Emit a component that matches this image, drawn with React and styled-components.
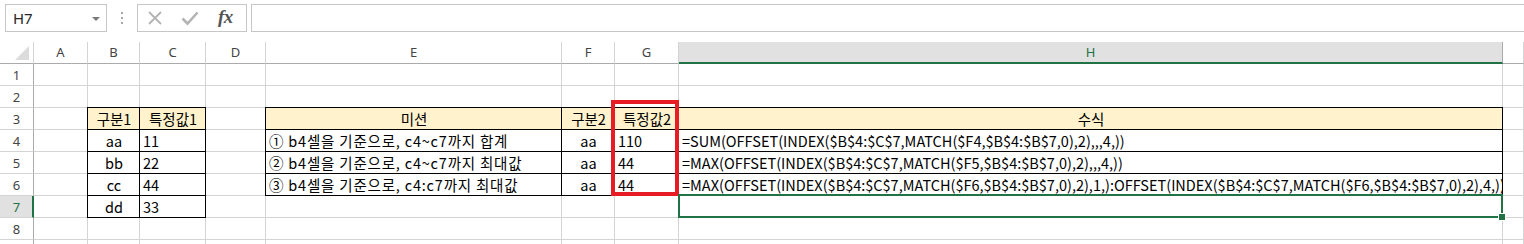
import React from 'react';
import styled, { createGlobalStyle } from 'styled-components';

const Global = createGlobalStyle`
  html, body { margin: 0; padding: 0; background: #fff; overflow: hidden; }
  body { font-family: "Noto Sans", "Liberation Sans", sans-serif; }
`;

const COLS = '34px 54px 52px 66px 60px 296px 53px 64px 824px 1fr';
const GRID = '#d4d4d4';
const HEAD_LINE = '#ababab';
const GREEN = '#217346';

const Page = styled.div`
  width: 1524px;
  height: 244px;
  overflow: hidden;
  display: flex;
  flex-direction: column;
  background: #fff;
`;

const FormulaBar = styled.div`
  height: 42px;
  flex-shrink: 0;
  display: flex;
  align-items: flex-start;
  padding-top: 4px;
  box-sizing: border-box;
`;

const NameBox = styled.div`
  margin-left: 5px;
  width: 102px;
  height: 28px;
  box-sizing: border-box;
  border: 1px solid #c6c6c6;
  display: flex;
  align-items: center;
  justify-content: space-between;
  padding: 0 6px 0 7px;
  font-family: "Noto Sans", "Liberation Sans", sans-serif;
  font-size: 15px;
  color: #262626;
`;

const Caret = styled.span`
  width: 0;
  height: 0;
  border-left: 4px solid transparent;
  border-right: 4px solid transparent;
  border-top: 4px solid #7a7a7a;
  margin-top: 1px;
`;

const Dots = styled.div`
  width: 30px;
  height: 28px;
  display: flex;
  align-items: center;
  justify-content: center;
`;

const ButtonBox = styled.div`
  width: 110px;
  height: 28px;
  box-sizing: border-box;
  border: 1px solid #c6c6c6;
  display: flex;
  align-items: center;
  padding-left: 9px;
`;

const IconSlot = styled.div`
  width: ${p => p.$w}px;
  height: 26px;
  display: flex;
  align-items: center;
`;

const Fx = styled.span`
  font-family: "Liberation Serif", "DejaVu Serif", serif;
  font-style: italic;
  font-weight: bold;
  font-size: 19px;
  color: #555;
  letter-spacing: -0.5px;
  margin-left: 1px;
  margin-top: -2px;
`;

const FormulaInput = styled.div`
  flex: 1;
  height: 28px;
  box-sizing: border-box;
  border: 1px solid #c6c6c6;
  border-right: none;
  margin-left: 4px;
`;

const Sheet = styled.div`
  display: flex;
  flex-direction: column;
  flex-shrink: 0;
`;

const Row = styled.div`
  display: grid;
  grid-template-columns: ${COLS};
  height: 22px;
  flex-shrink: 0;
`;

const ColHead = styled.div`
  box-sizing: border-box;
  height: 22px;
  border-right: 1px solid ${p => (p.$sel ? HEAD_LINE : GRID)};
  border-bottom: ${p => (p.$sel ? `2px solid ${GREEN}` : `1px solid ${HEAD_LINE}`)};
  background: ${p => (p.$sel ? '#e1e1e1' : '#fff')};
  color: ${p => (p.$sel ? GREEN : '#444')};
  font-family: "Noto Sans", "Liberation Sans", sans-serif;
  font-size: 13px;
  display: flex;
  align-items: center;
  justify-content: center;
  padding-bottom: ${p => (p.$sel ? 0 : 1)}px;
`;

const Corner = styled.div`
  box-sizing: border-box;
  height: 22px;
  border-right: 1px solid ${GRID};
  border-bottom: 1px solid ${HEAD_LINE};
  display: flex;
  align-items: flex-end;
  justify-content: flex-end;
  padding: 0 4px 3px 0;
`;

const Tri = styled.div`
  width: 0;
  height: 0;
  border-left: 14px solid transparent;
  border-bottom: 14px solid #dcdcdc;
`;

const RowHead = styled.div`
  box-sizing: border-box;
  border-right: ${p => (p.$sel ? `2px solid ${GREEN}` : `1px solid ${HEAD_LINE}`)};
  border-bottom: 1px solid ${GRID};
  background: ${p => (p.$sel ? '#e1e1e1' : '#fff')};
  color: ${p => (p.$sel ? GREEN : '#444')};
  font-family: "Noto Sans", "Liberation Sans", sans-serif;
  font-size: 13px;
  display: flex;
  align-items: center;
  justify-content: center;
  padding-left: ${p => (p.$sel ? 1 : 0)}px;
`;

const Cell = styled.div`
  position: relative;
  box-sizing: border-box;
  border-right: 1px solid ${GRID};
  border-bottom: 1px solid ${GRID};
  background: ${p => (p.$head ? '#fff2cc' : '#fff')};
  font-family: "Noto Sans CJK KR", "Noto Sans", sans-serif;
  font-size: 14.5px;
  letter-spacing: ${p => (p.$wide ? '0.8px' : '0')};
  color: #000;
  display: flex;
  align-items: center;
  justify-content: ${p => (p.$align === 'center' ? 'center' : 'flex-start')};
  padding: 1px 2px 0 3px;
  white-space: nowrap;
  line-height: 1;

  ${p =>
    p.$table &&
    `
    &::after {
      content: '';
      position: absolute;
      top: -1px;
      left: -1px;
      right: -1px;
      bottom: -1px;
      border: 1px solid #000;
      pointer-events: none;
    }
  `}
`;

const RedBox = styled.div`
  position: absolute;
  z-index: 5;
  top: -8px;
  left: -4px;
  width: 68px;
  height: 96px;
  box-sizing: border-box;
  border: 4px solid #e81c24;
  pointer-events: none;
`;

const Selection = styled.div`
  position: absolute;
  z-index: 5;
  top: -2px;
  left: -1px;
  right: -1px;
  bottom: -1px;
  box-sizing: border-box;
  border: 2px solid ${GREEN};
  pointer-events: none;
`;

const Handle = styled.div`
  position: absolute;
  right: -4px;
  bottom: -4px;
  width: 6px;
  height: 6px;
  background: ${GREEN};
  box-shadow: 0 0 0 1px #fff;
`;

const LETTERS = ['A', 'B', 'C', 'D', 'E', 'F', 'G', 'H', ''];

const h = (text) => ({ text, head: true, table: true, align: 'center' });
const c = (text) => ({ text, table: true, align: 'center' });
const l = (text) => ({ text, table: true, align: 'left' });
const m = (text) => ({ text, table: true, align: 'left', wide: true });

const ROWS = {
  3: { 2: h('구분1'), 3: h('특정값1'), 5: h('미션'), 6: h('구분2'), 7: { ...h('특정값2'), red: true }, 8: h('수식') },
  4: {
    2: c('aa'), 3: l('11'),
    5: m('① b4셀을 기준으로, c4~c7까지 합계'), 6: c('aa'), 7: l('110'),
    8: l('=SUM(OFFSET(INDEX($B$4:$C$7,MATCH($F4,$B$4:$B$7,0),2),,,4,))'),
  },
  5: {
    2: c('bb'), 3: l('22'),
    5: m('② b4셀을 기준으로, c4~c7까지 최대값'), 6: c('aa'), 7: l('44'),
    8: l('=MAX(OFFSET(INDEX($B$4:$C$7,MATCH($F5,$B$4:$B$7,0),2),,,4,))'),
  },
  6: {
    2: c('cc'), 3: l('44'),
    5: m('③ b4셀을 기준으로, c4:c7까지 최대값'), 6: c('aa'), 7: l('44'),
    8: l('=MAX(OFFSET(INDEX($B$4:$C$7,MATCH($F6,$B$4:$B$7,0),2),1,):OFFSET(INDEX($B$4:$C$7,MATCH($F6,$B$4:$B$7,0),2),4,))'),
  },
  7: { 2: c('dd'), 3: l('33'), 8: { sel: true } },
};

const CloseIcon = () => (
  <svg width="16" height="16" viewBox="0 0 16 16">
    <path d="M2 2 L14 14 M14 2 L2 14" stroke="#b4b4b4" strokeWidth="1.8" fill="none" />
  </svg>
);

const CheckIcon = () => (
  <svg width="18" height="16" viewBox="0 0 18 16">
    <path d="M1.5 8.5 L6.5 13.5 L16.5 2.5" stroke="#b4b4b4" strokeWidth="2.6" fill="none" />
  </svg>
);

const DotsIcon = () => (
  <svg width="4" height="14" viewBox="0 0 4 14">
    <rect x="1" y="1" width="2" height="2" fill="#a6a6a6" />
    <rect x="1" y="6" width="2" height="2" fill="#a6a6a6" />
    <rect x="1" y="11" width="2" height="2" fill="#a6a6a6" />
  </svg>
);

export default function App() {
  const rowNums = [1, 2, 3, 4, 5, 6, 7, 8, 9];
  return (
    <Page>
      <Global />
      <FormulaBar>
        <NameBox>
          <span>H7</span>
          <Caret />
        </NameBox>
        <Dots>
          <DotsIcon />
        </Dots>
        <ButtonBox>
          <IconSlot $w={34}><CloseIcon /></IconSlot>
          <IconSlot $w={36}><CheckIcon /></IconSlot>
          <IconSlot $w={28}><Fx>fx</Fx></IconSlot>
        </ButtonBox>
        <FormulaInput />
      </FormulaBar>
      <Sheet>
        <Row>
          <Corner><Tri /></Corner>
          {LETTERS.map((L, i) => (
            <ColHead key={i} $sel={L === 'H'}>{L}</ColHead>
          ))}
        </Row>
        {rowNums.map((r) => {
          const data = ROWS[r] || {};
          return (
            <Row key={r}>
              <RowHead $sel={r === 7}>{r < 9 ? r : ''}</RowHead>
              {LETTERS.map((_, ci) => {
                const col = ci + 1;
                const d = data[col] || {};
                return (
                  <Cell key={col} $head={d.head} $table={d.table} $align={d.align} $wide={d.wide}>
                    {d.text}
                    {d.red && <RedBox />}
                    {d.sel && (
                      <Selection>
                        <Handle />
                      </Selection>
                    )}
                  </Cell>
                );
              })}
            </Row>
          );
        })}
      </Sheet>
    </Page>
  );
}
